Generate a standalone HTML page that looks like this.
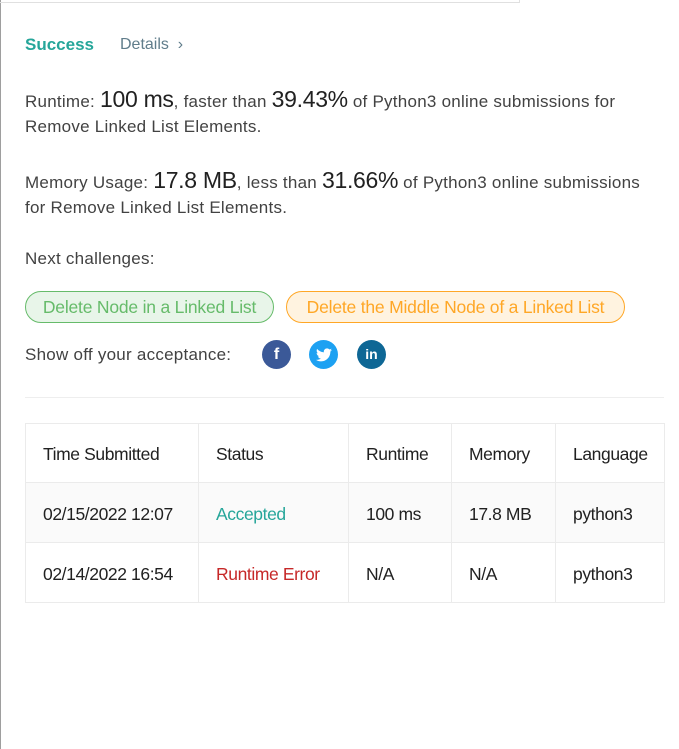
<!DOCTYPE html>
<html><head><meta charset="utf-8"><style>
body{margin:0;width:679px;height:749px;background:#fff;font-family:"Liberation Sans",sans-serif;color:#424242;position:relative;overflow:hidden}
.abs{position:absolute;white-space:nowrap}
.lb{position:absolute;left:0;top:0;width:1px;height:749px;background:#9e9e9e}
.tb{position:absolute;left:0;top:0;width:519px;height:2px;border-bottom:1px solid #e0e0e0;border-right:1px solid #e0e0e0}
.p{font-size:17px;letter-spacing:0.25px}
.big{font-size:23px;color:#212121;letter-spacing:-0.3px}
.pill{position:absolute;height:32px;box-sizing:border-box;border-radius:16px;font-size:17.5px;line-height:31px;text-align:center;letter-spacing:-0.2px}
.ic{position:absolute;width:29px;height:29px;border-radius:50%;color:#fff;font-weight:bold;text-align:center;line-height:29px;font-size:16px}
table{position:absolute;left:25px;top:423px;border-collapse:collapse;font-size:17.5px;color:#212121}
td{border:1px solid #ebebeb;height:59px;padding:3px 0 0 17px;box-sizing:border-box;letter-spacing:-0.4px;white-space:nowrap}
</style></head><body>
<div class="lb"></div><div class="tb"></div>
<div class="abs" style="left:25px;top:35px;font-size:17px;font-weight:bold;color:#26a69a">Success</div>
<div class="abs" style="left:120px;top:36px;font-size:16px;color:#607d8b">Details &nbsp;›</div>
<div class="abs p" style="left:25px;top:86px">Runtime: <span class="big">100 ms</span>, faster than <span class="big">39.43%</span> of Python3 online submissions for</div>
<div class="abs p" style="left:25px;top:117px">Remove Linked List Elements.</div>
<div class="abs p" style="left:25px;top:167px">Memory Usage: <span class="big">17.8 MB</span>, less than <span class="big">31.66%</span> of Python3 online submissions</div>
<div class="abs p" style="left:25px;top:198px">for Remove Linked List Elements.</div>
<div class="abs p" style="left:25px;top:249px">Next challenges:</div>
<div class="pill" style="left:25px;top:291px;width:249px;border:1px solid #66bb6a;background:#e8f5e9;color:#66bb6a">Delete Node in a Linked List</div>
<div class="pill" style="left:286px;top:291px;width:339px;border:1px solid #ffa726;background:#fff3e0;color:#ffa726">Delete the Middle Node of a Linked List</div>
<div class="abs p" style="left:25px;top:345px">Show off your acceptance:</div>
<div class="ic" style="left:262px;top:340px;background:#3b5998">f</div>
<div class="ic" style="left:309px;top:340px;background:#1da1f2;font-size:14px">
<svg width="16" height="14" viewBox="0 0 24 20" style="margin-top:8px"><path fill="#fff" d="M24 2.4c-.9.4-1.8.7-2.8.8 1-.6 1.8-1.6 2.2-2.7-1 .6-2 1-3.1 1.2C19.3.7 18 0 16.6 0c-2.7 0-4.9 2.200-4.9 4.9 0 .4 0 .8.1 1.1C7.7 5.8 4.1 3.9 1.7.9c-.4.7-.7 1.600-.7 2.5 0 1.7.9 3.2 2.2 4.1-.8 0-1.6-.2-2.2-.6v.1c0 2.4 1.7 4.4 3.9 4.8-.4.1-.8.2-1.3.2-.3 0-.6 0-.9-.1.6 2 2.4 3.4 4.6 3.4-1.700 1.3-3.8 2.1-6.1 2.1-.4 0-.8 0-1.2-.1 2.2 1.4 4.8 2.2 7.5 2.2 9.1 0 14-7.5 14-14v-.6c1-.7 1.8-1.6 2.5-2.5z"/></svg></div>
<div class="ic" style="left:357px;top:340px;background:#0e6795;font-size:14px">in</div>
<div class="abs" style="left:25px;top:397px;width:639px;height:1px;background:#eeeeee"></div>
<table>
<tr><td style="width:173px">Time Submitted</td><td style="width:150px">Status</td><td style="width:103px">Runtime</td><td style="width:104px">Memory</td><td style="width:109px">Language</td></tr>
<tr style="background:#fafafa;height:60px"><td>02/15/2022 12:07</td><td style="color:#26a69a">Accepted</td><td>100 ms</td><td>17.8 MB</td><td>python3</td></tr>
<tr style="height:60px"><td>02/14/2022 16:54</td><td style="color:#c62828">Runtime Error</td><td>N/A</td><td>N/A</td><td>python3</td></tr>
</table>
</body></html>
